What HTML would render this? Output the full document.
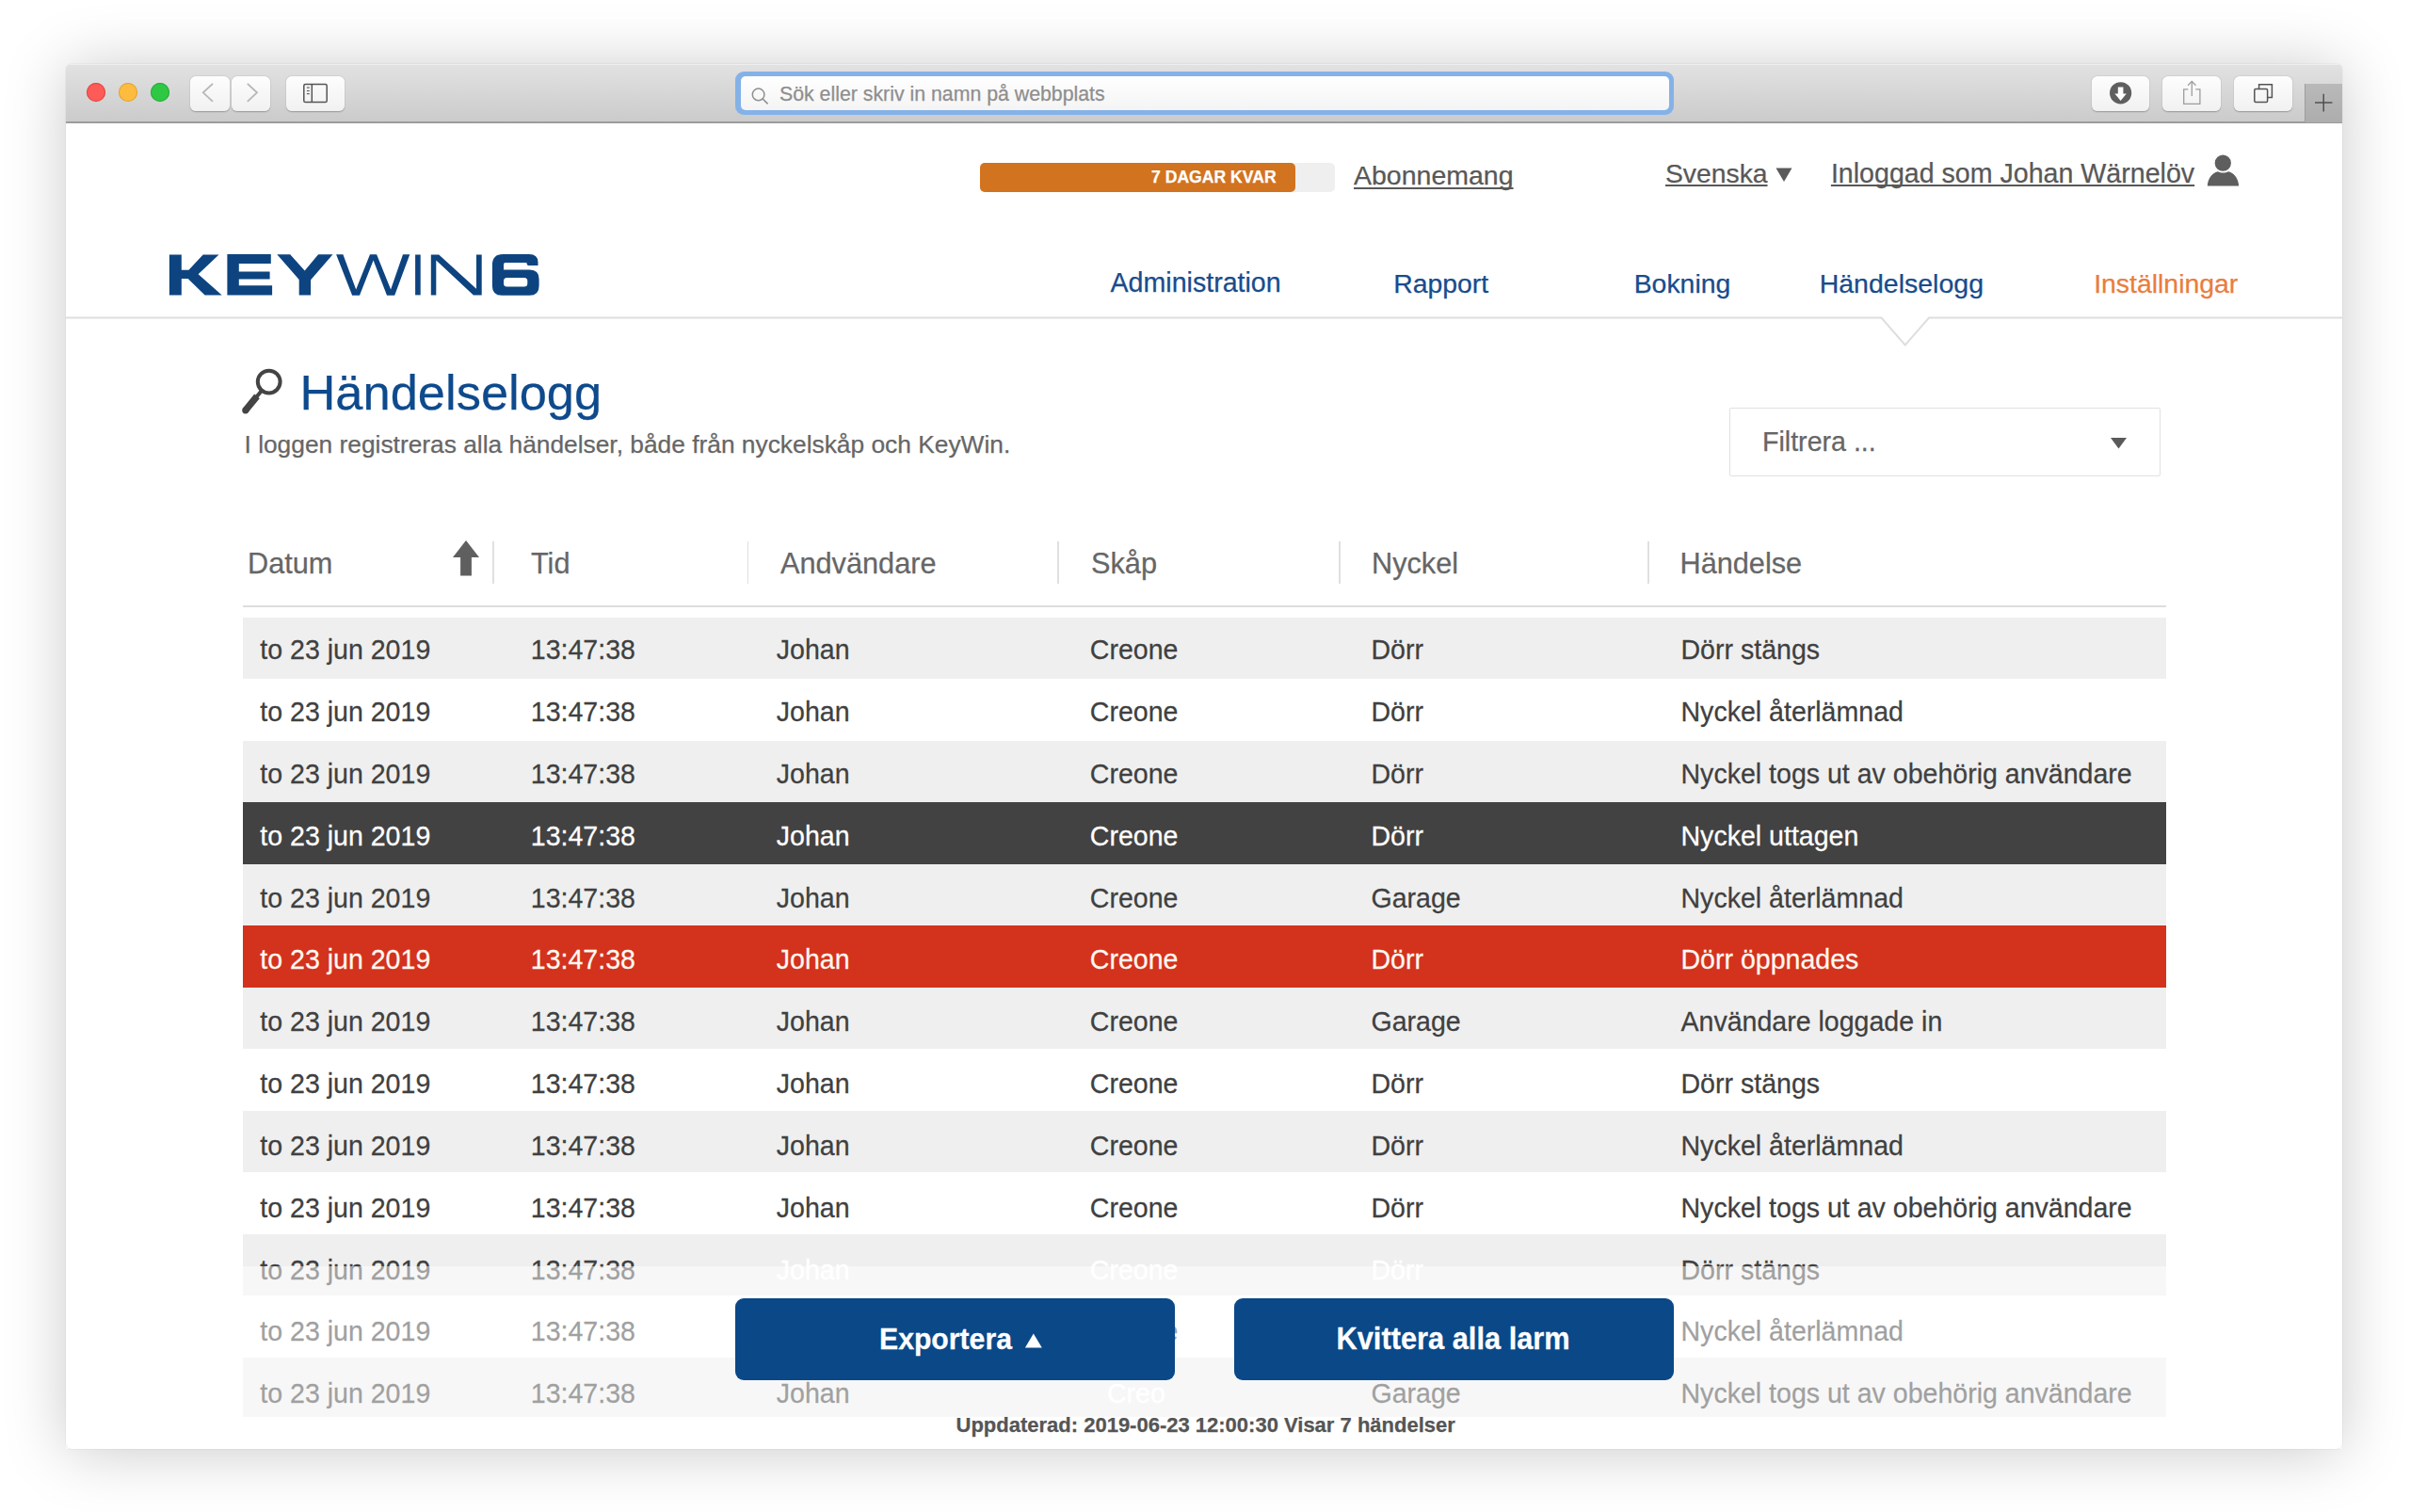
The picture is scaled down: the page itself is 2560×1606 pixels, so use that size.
<!DOCTYPE html>
<html><head><meta charset="utf-8"><title>KeyWin6</title><style>
*{margin:0;padding:0;box-sizing:border-box}
html,body{width:2560px;height:1606px;overflow:hidden;background:#fff}
body{position:relative;font-family:"Liberation Sans",sans-serif}
.t{position:absolute;white-space:nowrap;-webkit-text-stroke:0.25px currentColor}
.abs{position:absolute}
.tbtn{position:absolute;top:81px;height:37px;border-radius:6px;background:linear-gradient(#fdfdfd,#f1f1f1);box-shadow:0 0.5px 1.5px rgba(0,0,0,.28)}
</style></head><body>
<div class="abs" style="left:70px;top:68px;width:2418px;height:1471px;border-radius:6px;background:#fff;box-shadow:0 3px 66px rgba(0,0,0,.21),0 0 1px rgba(0,0,0,.3);overflow:hidden">
<div class="abs" style="left:0;top:0;width:2418px;height:62.5px;background:linear-gradient(#e2e2e2,#cbcbcb);border-bottom:2px solid #9c9c9c;box-shadow:inset 0 1px 0 #efefef"></div>
</div>
<div class="abs" style="left:92.1px;top:87.8px;width:20.4px;height:20.4px;border-radius:50%;background:#fc5b57;box-shadow:inset 0 0 0 0.9px #e0443f"></div>
<div class="abs" style="left:126.0px;top:87.8px;width:20.4px;height:20.4px;border-radius:50%;background:#fdbc3f;box-shadow:inset 0 0 0 0.9px #dea236"></div>
<div class="abs" style="left:159.8px;top:87.8px;width:20.4px;height:20.4px;border-radius:50%;background:#2fc844;box-shadow:inset 0 0 0 0.9px #27a83a"></div>
<div class="tbtn" style="left:202px;width:42px"></div>
<div class="tbtn" style="left:246px;width:41px"></div>
<svg class="abs" style="left:202px;top:81px" width="85" height="37" viewBox="0 0 85 37"><path d="M24 7.8 L13.8 17.3 L24 26.8" fill="none" stroke="#b6b6b6" stroke-width="1.8"/><path d="M60.8 7.8 L71 17.3 L60.8 26.8" fill="none" stroke="#b6b6b6" stroke-width="1.8"/></svg>
<div class="tbtn" style="left:304px;width:62px"></div>
<svg class="abs" style="left:304px;top:81px" width="62" height="37" viewBox="0 0 62 37"><rect x="18.8" y="8.6" width="24.4" height="19" rx="1.6" fill="none" stroke="#555" stroke-width="1.5"/><line x1="27.3" y1="8.6" x2="27.3" y2="27.6" stroke="#555" stroke-width="1.5"/><line x1="21.8" y1="12.1" x2="24.8" y2="12.1" stroke="#666" stroke-width="1.3"/><line x1="21.8" y1="15.5" x2="24.8" y2="15.5" stroke="#666" stroke-width="1.3"/><line x1="21.8" y1="18.6" x2="24.8" y2="18.6" stroke="#666" stroke-width="1.3"/></svg>
<div class="abs" style="left:781px;top:75.5px;width:997px;height:46.5px;border-radius:9px;background:#84b2e8"></div>
<div class="abs" style="left:786.5px;top:81px;width:986px;height:35.5px;border-radius:5px;background:linear-gradient(#ffffff,#f4f4f4)"></div>
<svg class="abs" style="left:796px;top:90.5px" width="24" height="24" viewBox="0 0 24 24"><circle cx="9.6" cy="9.4" r="6.3" fill="none" stroke="#8f8f8f" stroke-width="1.5"/><line x1="14.2" y1="14" x2="19.6" y2="19.4" stroke="#8f8f8f" stroke-width="1.6"/></svg>
<div class="t" style="left:828.00px;top:90.37px;font-size:21.3px;line-height:21.3px;color:#8e8e8e;font-weight:400;">Sök eller skriv in namn på webbplats</div>
<div class="tbtn" style="left:2222px;width:61px"></div>
<div class="tbtn" style="left:2297px;width:62px"></div>
<div class="tbtn" style="left:2373px;width:62px"></div>
<svg class="abs" style="left:2222px;top:81px" width="61" height="37" viewBox="0 0 61 37"><circle cx="30.6" cy="17.8" r="11.6" fill="#5f5f5f"/><path d="M27.8 11.4 h5.6 v7 h3.4 l-6.2 7.5 l-6.2 -7.5 h3.4 z" fill="#fff"/></svg>
<svg class="abs" style="left:2297px;top:81px" width="62" height="37" viewBox="0 0 62 37"><path d="M27.3 13.8 h-4.6 v15.6 h17.2 v-15.6 h-4.6" fill="none" stroke="#9d9d9d" stroke-width="1.3"/><line x1="31.3" y1="5.6" x2="31.3" y2="21" stroke="#9d9d9d" stroke-width="1.3"/><path d="M27.1 9.7 L31.3 5.4 L35.5 9.7" fill="none" stroke="#9d9d9d" stroke-width="1.3"/></svg>
<svg class="abs" style="left:2373px;top:81px" width="62" height="37" viewBox="0 0 62 37"><rect x="21.8" y="13.6" width="13.8" height="13.8" rx="1.2" fill="none" stroke="#555" stroke-width="1.5"/><path d="M26.6 13.6 V8.8 h13.8 v13.6 h-4.8" fill="none" stroke="#555" stroke-width="1.5"/></svg>
<div class="abs" style="left:2448px;top:89px;width:40px;height:41px;background:linear-gradient(#b9b9b9,#adadad);border-left:1px solid #9d9d9d"></div>
<svg class="abs" style="left:2448px;top:89px" width="40" height="41" viewBox="0 0 40 41"><line x1="11" y1="20" x2="29.5" y2="20" stroke="#4a4a4a" stroke-width="1.4"/><line x1="20.2" y1="10.8" x2="20.2" y2="29.5" stroke="#4a4a4a" stroke-width="1.4"/></svg>
<div class="abs" style="left:1041px;top:172.5px;width:377px;height:31.5px;border-radius:5px;background:#efefef"></div>
<div class="abs" style="left:1041px;top:172.5px;width:335px;height:31.5px;border-radius:5px;background:#d2731f"></div>
<div class="t" style="left:1223.00px;top:179.90px;font-size:17.6px;line-height:17.6px;color:#fff;font-weight:700;">7 DAGAR KVAR</div>
<div class="t" style="left:1438.00px;top:172.37px;font-size:28.5px;line-height:28.5px;color:#585858;font-weight:400;text-decoration:underline;text-underline-offset:3px;text-decoration-thickness:1.5px;text-decoration-skip-ink:none">Abonnemang</div>
<div class="t" style="left:1769.00px;top:169.84px;font-size:28.3px;line-height:28.3px;color:#585858;font-weight:400;text-decoration:underline;text-underline-offset:2.2px;text-decoration-thickness:1.5px;text-decoration-skip-ink:none">Svenska</div>
<svg class="abs" style="left:1886px;top:178px" width="18" height="15" viewBox="0 0 18 15"><path d="M0.5 0.5 H17.5 L9 15 Z" fill="#5a5a5a"/></svg>
<div class="t" style="left:1944.90px;top:169.59px;font-size:28.6px;line-height:28.6px;color:#585858;font-weight:400;text-decoration:underline;text-underline-offset:2.2px;text-decoration-thickness:1.5px;text-decoration-skip-ink:none">Inloggad som Johan Wärnelöv</div>
<svg class="abs" style="left:2344px;top:164px" width="35" height="34" viewBox="0 0 35 34"><circle cx="17.3" cy="9.2" r="8.6" fill="#5e5e5e"/><path d="M0.8 33.5 C1.5 24 7 19.2 12 18.3 C15 20 20 20 23 18.3 C28 19.2 33.5 24 34.2 33.5 Z" fill="#5e5e5e"/></svg>
<svg class="abs" style="left:0;top:0" width="600" height="340" viewBox="0 0 600 340"><g fill="#0d4480"><path d="M179.9 270.5 H192.8 V286.8 H200.5 L215.7 270.5 H232.5 L210.6 291.2 L235.7 313.6 H217.6 L199.7 296 H192.8 V313.6 H179.9 Z"/><path d="M241.4 270.1 H287.8 V279.9 H253.8 V288.6 H286.6 V296.5 H253.8 V303.2 H289.1 V313.5 H241.4 Z"/><path d="M294.3 270.3 H308.2 L323.7 287.4 L338.1 270.3 H353.5 L330.1 297.2 V313.6 H317.7 V297 Z"/><path d="M357.1 270.3 H364.4 L378.2 307.6 L393 270.3 H400.1 L415.1 307.6 L428 270.3 H435.3 L419.2 313.7 H411 L396.6 276.5 L382 313.7 H374.1 Z"/><rect x="441.1" y="270.5" width="5.6" height="42.9"/><path d="M457.8 270.5 H466.2 L506 306.8 V270.5 H511.7 V313.4 H502.9 L463.3 276.6 V313.4 H457.8 Z"/><path d="M534.4 269.9 H562 Q571.5 269.9 571.5 278.5 V282 H561.5 Q559.6 282 559.4 279 H536.8 Q535 279 535 281 V286.6 H562.6 Q572.6 286.6 572.6 296.6 V303.8 Q572.6 313.8 562.6 313.8 H533 Q522.9 313.8 522.9 303.8 V281.4 Q522.9 269.9 534.4 269.9 Z M538.5 295 Q535 295 535 298.5 V301.1 Q535 304.6 538.5 304.6 H556.8 Q560.3 304.6 560.3 301.1 V298.5 Q560.3 295 556.8 295 Z" fill-rule="evenodd"/></g></svg>
<div class="t" style="left:1179.50px;top:286.49px;font-size:28.6px;line-height:28.6px;color:#184c8d;font-weight:400;">Administration</div>
<div class="t" style="left:1480.20px;top:286.66px;font-size:28.4px;line-height:28.4px;color:#184c8d;font-weight:400;">Rapport</div>
<div class="t" style="left:1735.70px;top:286.66px;font-size:28.4px;line-height:28.4px;color:#184c8d;font-weight:400;">Bokning</div>
<div class="t" style="left:1932.70px;top:286.57px;font-size:28.5px;line-height:28.5px;color:#184c8d;font-weight:400;">Händelselogg</div>
<div class="t" style="left:2224.20px;top:286.66px;font-size:28.4px;line-height:28.4px;color:#e97d3e;font-weight:400;">Inställningar</div>
<svg class="abs" style="left:70px;top:320px" width="2418" height="60" viewBox="70 320 2418 60"><path d="M70 337.5 H1998.5 L2023.7 366.5 L2049 337.5 H2488" fill="none" stroke="#dedede" stroke-width="2"/></svg>
<svg class="abs" style="left:250px;top:385px" width="60" height="60" viewBox="0 0 60 60"><circle cx="35.7" cy="20.6" r="11.9" fill="none" stroke="#444" stroke-width="4"/><line x1="28.5" y1="29.3" x2="21.5" y2="37.8" stroke="#444" stroke-width="4"/><line x1="23" y1="35.9" x2="10.8" y2="50.8" stroke="#444" stroke-width="7.2"/><circle cx="10.8" cy="50.8" r="3.6" fill="#444"/></svg>
<div class="t" style="left:318.50px;top:390.50px;font-size:52.45px;line-height:52.45px;color:#0e4a8c;font-weight:400;">Händelselogg</div>
<div class="t" style="left:259.50px;top:458.61px;font-size:26.33px;line-height:26.33px;color:#666666;font-weight:400;">I loggen registreras alla händelser, både från nyckelskåp och KeyWin.</div>
<div class="abs" style="left:1837px;top:433px;width:458px;height:73px;border:1.5px solid #e1e1e1;border-radius:2px;background:#fff"></div>
<div class="t" style="left:1872.00px;top:454.79px;font-size:28.6px;line-height:28.6px;color:#666666;font-weight:400;">Filtrera ...</div>
<svg class="abs" style="left:2241px;top:464px" width="19" height="13" viewBox="0 0 19 13"><path d="M1 1 H18 L9.5 12.5 Z" fill="#5a5a5a"/></svg>
<div class="t" style="left:263.00px;top:583.51px;font-size:30.7px;line-height:30.7px;color:#666666;font-weight:400;">Datum</div>
<div class="t" style="left:564.00px;top:583.51px;font-size:30.7px;line-height:30.7px;color:#666666;font-weight:400;">Tid</div>
<div class="t" style="left:829.00px;top:583.51px;font-size:30.7px;line-height:30.7px;color:#666666;font-weight:400;">Andvändare</div>
<div class="t" style="left:1159.00px;top:583.51px;font-size:30.7px;line-height:30.7px;color:#666666;font-weight:400;">Skåp</div>
<div class="t" style="left:1457.00px;top:583.51px;font-size:30.7px;line-height:30.7px;color:#666666;font-weight:400;">Nyckel</div>
<div class="t" style="left:1784.50px;top:583.51px;font-size:30.7px;line-height:30.7px;color:#666666;font-weight:400;">Händelse</div>
<svg class="abs" style="left:480px;top:573px" width="30" height="40" viewBox="0 0 30 40"><path d="M15 1 L29 19 H20.9 V38.6 H9.1 V19 H1 Z" fill="#5f5f5f"/></svg>
<div class="abs" style="left:523.45px;top:575px;width:1.5px;height:45px;background:#e0e0e0"></div>
<div class="abs" style="left:793.75px;top:575px;width:1.5px;height:45px;background:#e0e0e0"></div>
<div class="abs" style="left:1123.25px;top:575px;width:1.5px;height:45px;background:#e0e0e0"></div>
<div class="abs" style="left:1422.25px;top:575px;width:1.5px;height:45px;background:#e0e0e0"></div>
<div class="abs" style="left:1750.05px;top:575px;width:1.5px;height:45px;background:#e0e0e0"></div>
<div class="abs" style="left:258px;top:643px;width:2043px;height:2px;background:#dddddd"></div>
<div class="abs" style="left:258px;top:655.90px;width:2043px;height:65.50px;background:#efefef"></div>
<div class="t" style="left:276.30px;top:676.23px;font-size:28.55px;line-height:28.55px;color:#404040;font-weight:400;transform:scaleY(1.05);transform-origin:0 24.17px;">to 23 jun 2019</div>
<div class="t" style="left:563.80px;top:676.23px;font-size:28.55px;line-height:28.55px;color:#404040;font-weight:400;transform:scaleY(1.05);transform-origin:0 24.17px;">13:47:38</div>
<div class="t" style="left:824.80px;top:676.23px;font-size:28.55px;line-height:28.55px;color:#404040;font-weight:400;transform:scaleY(1.05);transform-origin:0 24.17px;">Johan</div>
<div class="t" style="left:1157.80px;top:676.23px;font-size:28.55px;line-height:28.55px;color:#404040;font-weight:400;transform:scaleY(1.05);transform-origin:0 24.17px;">Creone</div>
<div class="t" style="left:1456.50px;top:676.23px;font-size:28.55px;line-height:28.55px;color:#404040;font-weight:400;transform:scaleY(1.05);transform-origin:0 24.17px;">Dörr</div>
<div class="t" style="left:1785.50px;top:676.23px;font-size:28.55px;line-height:28.55px;color:#404040;font-weight:400;transform:scaleY(1.05);transform-origin:0 24.17px;">Dörr stängs</div>
<div class="t" style="left:276.30px;top:742.07px;font-size:28.55px;line-height:28.55px;color:#404040;font-weight:400;transform:scaleY(1.05);transform-origin:0 24.17px;">to 23 jun 2019</div>
<div class="t" style="left:563.80px;top:742.07px;font-size:28.55px;line-height:28.55px;color:#404040;font-weight:400;transform:scaleY(1.05);transform-origin:0 24.17px;">13:47:38</div>
<div class="t" style="left:824.80px;top:742.07px;font-size:28.55px;line-height:28.55px;color:#404040;font-weight:400;transform:scaleY(1.05);transform-origin:0 24.17px;">Johan</div>
<div class="t" style="left:1157.80px;top:742.07px;font-size:28.55px;line-height:28.55px;color:#404040;font-weight:400;transform:scaleY(1.05);transform-origin:0 24.17px;">Creone</div>
<div class="t" style="left:1456.50px;top:742.07px;font-size:28.55px;line-height:28.55px;color:#404040;font-weight:400;transform:scaleY(1.05);transform-origin:0 24.17px;">Dörr</div>
<div class="t" style="left:1785.50px;top:742.07px;font-size:28.55px;line-height:28.55px;color:#404040;font-weight:400;transform:scaleY(1.05);transform-origin:0 24.17px;">Nyckel återlämnad</div>
<div class="abs" style="left:258px;top:786.90px;width:2043px;height:65.50px;background:#efefef"></div>
<div class="t" style="left:276.30px;top:807.91px;font-size:28.55px;line-height:28.55px;color:#404040;font-weight:400;transform:scaleY(1.05);transform-origin:0 24.17px;">to 23 jun 2019</div>
<div class="t" style="left:563.80px;top:807.91px;font-size:28.55px;line-height:28.55px;color:#404040;font-weight:400;transform:scaleY(1.05);transform-origin:0 24.17px;">13:47:38</div>
<div class="t" style="left:824.80px;top:807.91px;font-size:28.55px;line-height:28.55px;color:#404040;font-weight:400;transform:scaleY(1.05);transform-origin:0 24.17px;">Johan</div>
<div class="t" style="left:1157.80px;top:807.91px;font-size:28.55px;line-height:28.55px;color:#404040;font-weight:400;transform:scaleY(1.05);transform-origin:0 24.17px;">Creone</div>
<div class="t" style="left:1456.50px;top:807.91px;font-size:28.55px;line-height:28.55px;color:#404040;font-weight:400;transform:scaleY(1.05);transform-origin:0 24.17px;">Dörr</div>
<div class="t" style="left:1785.50px;top:807.91px;font-size:28.55px;line-height:28.55px;color:#404040;font-weight:400;transform:scaleY(1.05);transform-origin:0 24.17px;">Nyckel togs ut av obehörig användare</div>
<div class="abs" style="left:258px;top:852.40px;width:2043px;height:65.50px;background:#424242"></div>
<div class="t" style="left:276.30px;top:873.75px;font-size:28.55px;line-height:28.55px;color:#ffffff;font-weight:400;transform:scaleY(1.05);transform-origin:0 24.17px;">to 23 jun 2019</div>
<div class="t" style="left:563.80px;top:873.75px;font-size:28.55px;line-height:28.55px;color:#ffffff;font-weight:400;transform:scaleY(1.05);transform-origin:0 24.17px;">13:47:38</div>
<div class="t" style="left:824.80px;top:873.75px;font-size:28.55px;line-height:28.55px;color:#ffffff;font-weight:400;transform:scaleY(1.05);transform-origin:0 24.17px;">Johan</div>
<div class="t" style="left:1157.80px;top:873.75px;font-size:28.55px;line-height:28.55px;color:#ffffff;font-weight:400;transform:scaleY(1.05);transform-origin:0 24.17px;">Creone</div>
<div class="t" style="left:1456.50px;top:873.75px;font-size:28.55px;line-height:28.55px;color:#ffffff;font-weight:400;transform:scaleY(1.05);transform-origin:0 24.17px;">Dörr</div>
<div class="t" style="left:1785.50px;top:873.75px;font-size:28.55px;line-height:28.55px;color:#ffffff;font-weight:400;transform:scaleY(1.05);transform-origin:0 24.17px;">Nyckel uttagen</div>
<div class="abs" style="left:258px;top:917.90px;width:2043px;height:65.50px;background:#efefef"></div>
<div class="t" style="left:276.30px;top:939.59px;font-size:28.55px;line-height:28.55px;color:#404040;font-weight:400;transform:scaleY(1.05);transform-origin:0 24.17px;">to 23 jun 2019</div>
<div class="t" style="left:563.80px;top:939.59px;font-size:28.55px;line-height:28.55px;color:#404040;font-weight:400;transform:scaleY(1.05);transform-origin:0 24.17px;">13:47:38</div>
<div class="t" style="left:824.80px;top:939.59px;font-size:28.55px;line-height:28.55px;color:#404040;font-weight:400;transform:scaleY(1.05);transform-origin:0 24.17px;">Johan</div>
<div class="t" style="left:1157.80px;top:939.59px;font-size:28.55px;line-height:28.55px;color:#404040;font-weight:400;transform:scaleY(1.05);transform-origin:0 24.17px;">Creone</div>
<div class="t" style="left:1456.50px;top:939.59px;font-size:28.55px;line-height:28.55px;color:#404040;font-weight:400;transform:scaleY(1.05);transform-origin:0 24.17px;">Garage</div>
<div class="t" style="left:1785.50px;top:939.59px;font-size:28.55px;line-height:28.55px;color:#404040;font-weight:400;transform:scaleY(1.05);transform-origin:0 24.17px;">Nyckel återlämnad</div>
<div class="abs" style="left:258px;top:983.40px;width:2043px;height:65.50px;background:#d3321d"></div>
<div class="t" style="left:276.30px;top:1005.43px;font-size:28.55px;line-height:28.55px;color:#fff8f0;font-weight:400;transform:scaleY(1.05);transform-origin:0 24.17px;">to 23 jun 2019</div>
<div class="t" style="left:563.80px;top:1005.43px;font-size:28.55px;line-height:28.55px;color:#fff8f0;font-weight:400;transform:scaleY(1.05);transform-origin:0 24.17px;">13:47:38</div>
<div class="t" style="left:824.80px;top:1005.43px;font-size:28.55px;line-height:28.55px;color:#fff8f0;font-weight:400;transform:scaleY(1.05);transform-origin:0 24.17px;">Johan</div>
<div class="t" style="left:1157.80px;top:1005.43px;font-size:28.55px;line-height:28.55px;color:#fff8f0;font-weight:400;transform:scaleY(1.05);transform-origin:0 24.17px;">Creone</div>
<div class="t" style="left:1456.50px;top:1005.43px;font-size:28.55px;line-height:28.55px;color:#fff8f0;font-weight:400;transform:scaleY(1.05);transform-origin:0 24.17px;">Dörr</div>
<div class="t" style="left:1785.50px;top:1005.43px;font-size:28.55px;line-height:28.55px;color:#fff8f0;font-weight:400;transform:scaleY(1.05);transform-origin:0 24.17px;">Dörr öppnades</div>
<div class="abs" style="left:258px;top:1048.90px;width:2043px;height:65.50px;background:#efefef"></div>
<div class="t" style="left:276.30px;top:1071.27px;font-size:28.55px;line-height:28.55px;color:#404040;font-weight:400;transform:scaleY(1.05);transform-origin:0 24.17px;">to 23 jun 2019</div>
<div class="t" style="left:563.80px;top:1071.27px;font-size:28.55px;line-height:28.55px;color:#404040;font-weight:400;transform:scaleY(1.05);transform-origin:0 24.17px;">13:47:38</div>
<div class="t" style="left:824.80px;top:1071.27px;font-size:28.55px;line-height:28.55px;color:#404040;font-weight:400;transform:scaleY(1.05);transform-origin:0 24.17px;">Johan</div>
<div class="t" style="left:1157.80px;top:1071.27px;font-size:28.55px;line-height:28.55px;color:#404040;font-weight:400;transform:scaleY(1.05);transform-origin:0 24.17px;">Creone</div>
<div class="t" style="left:1456.50px;top:1071.27px;font-size:28.55px;line-height:28.55px;color:#404040;font-weight:400;transform:scaleY(1.05);transform-origin:0 24.17px;">Garage</div>
<div class="t" style="left:1785.50px;top:1071.27px;font-size:28.55px;line-height:28.55px;color:#404040;font-weight:400;transform:scaleY(1.05);transform-origin:0 24.17px;">Användare loggade in</div>
<div class="t" style="left:276.30px;top:1137.11px;font-size:28.55px;line-height:28.55px;color:#404040;font-weight:400;transform:scaleY(1.05);transform-origin:0 24.17px;">to 23 jun 2019</div>
<div class="t" style="left:563.80px;top:1137.11px;font-size:28.55px;line-height:28.55px;color:#404040;font-weight:400;transform:scaleY(1.05);transform-origin:0 24.17px;">13:47:38</div>
<div class="t" style="left:824.80px;top:1137.11px;font-size:28.55px;line-height:28.55px;color:#404040;font-weight:400;transform:scaleY(1.05);transform-origin:0 24.17px;">Johan</div>
<div class="t" style="left:1157.80px;top:1137.11px;font-size:28.55px;line-height:28.55px;color:#404040;font-weight:400;transform:scaleY(1.05);transform-origin:0 24.17px;">Creone</div>
<div class="t" style="left:1456.50px;top:1137.11px;font-size:28.55px;line-height:28.55px;color:#404040;font-weight:400;transform:scaleY(1.05);transform-origin:0 24.17px;">Dörr</div>
<div class="t" style="left:1785.50px;top:1137.11px;font-size:28.55px;line-height:28.55px;color:#404040;font-weight:400;transform:scaleY(1.05);transform-origin:0 24.17px;">Dörr stängs</div>
<div class="abs" style="left:258px;top:1179.90px;width:2043px;height:65.50px;background:#efefef"></div>
<div class="t" style="left:276.30px;top:1202.95px;font-size:28.55px;line-height:28.55px;color:#404040;font-weight:400;transform:scaleY(1.05);transform-origin:0 24.17px;">to 23 jun 2019</div>
<div class="t" style="left:563.80px;top:1202.95px;font-size:28.55px;line-height:28.55px;color:#404040;font-weight:400;transform:scaleY(1.05);transform-origin:0 24.17px;">13:47:38</div>
<div class="t" style="left:824.80px;top:1202.95px;font-size:28.55px;line-height:28.55px;color:#404040;font-weight:400;transform:scaleY(1.05);transform-origin:0 24.17px;">Johan</div>
<div class="t" style="left:1157.80px;top:1202.95px;font-size:28.55px;line-height:28.55px;color:#404040;font-weight:400;transform:scaleY(1.05);transform-origin:0 24.17px;">Creone</div>
<div class="t" style="left:1456.50px;top:1202.95px;font-size:28.55px;line-height:28.55px;color:#404040;font-weight:400;transform:scaleY(1.05);transform-origin:0 24.17px;">Dörr</div>
<div class="t" style="left:1785.50px;top:1202.95px;font-size:28.55px;line-height:28.55px;color:#404040;font-weight:400;transform:scaleY(1.05);transform-origin:0 24.17px;">Nyckel återlämnad</div>
<div class="t" style="left:276.30px;top:1268.79px;font-size:28.55px;line-height:28.55px;color:#404040;font-weight:400;transform:scaleY(1.05);transform-origin:0 24.17px;">to 23 jun 2019</div>
<div class="t" style="left:563.80px;top:1268.79px;font-size:28.55px;line-height:28.55px;color:#404040;font-weight:400;transform:scaleY(1.05);transform-origin:0 24.17px;">13:47:38</div>
<div class="t" style="left:824.80px;top:1268.79px;font-size:28.55px;line-height:28.55px;color:#404040;font-weight:400;transform:scaleY(1.05);transform-origin:0 24.17px;">Johan</div>
<div class="t" style="left:1157.80px;top:1268.79px;font-size:28.55px;line-height:28.55px;color:#404040;font-weight:400;transform:scaleY(1.05);transform-origin:0 24.17px;">Creone</div>
<div class="t" style="left:1456.50px;top:1268.79px;font-size:28.55px;line-height:28.55px;color:#404040;font-weight:400;transform:scaleY(1.05);transform-origin:0 24.17px;">Dörr</div>
<div class="t" style="left:1785.50px;top:1268.79px;font-size:28.55px;line-height:28.55px;color:#404040;font-weight:400;transform:scaleY(1.05);transform-origin:0 24.17px;">Nyckel togs ut av obehörig användare</div>
<div class="abs" style="left:258px;top:1310.90px;width:2043px;height:65.50px;background:#efefef"></div>
<div class="t" style="left:276.30px;top:1334.63px;font-size:28.55px;line-height:28.55px;color:#404040;font-weight:400;transform:scaleY(1.05);transform-origin:0 24.17px;">to 23 jun 2019</div>
<div class="t" style="left:563.80px;top:1334.63px;font-size:28.55px;line-height:28.55px;color:#404040;font-weight:400;transform:scaleY(1.05);transform-origin:0 24.17px;">13:47:38</div>
<div class="t" style="left:824.80px;top:1334.63px;font-size:28.55px;line-height:28.55px;color:#ffffff;font-weight:400;transform:scaleY(1.05);transform-origin:0 24.17px;">Johan</div>
<div class="t" style="left:1157.80px;top:1334.63px;font-size:28.55px;line-height:28.55px;color:#ffffff;font-weight:400;transform:scaleY(1.05);transform-origin:0 24.17px;">Creone</div>
<div class="t" style="left:1456.50px;top:1334.63px;font-size:28.55px;line-height:28.55px;color:#ffffff;font-weight:400;transform:scaleY(1.05);transform-origin:0 24.17px;">Dörr</div>
<div class="t" style="left:1785.50px;top:1334.63px;font-size:28.55px;line-height:28.55px;color:#404040;font-weight:400;transform:scaleY(1.05);transform-origin:0 24.17px;">Dörr stängs</div>
<div class="t" style="left:276.30px;top:1400.47px;font-size:28.55px;line-height:28.55px;color:#404040;font-weight:400;transform:scaleY(1.05);transform-origin:0 24.17px;">to 23 jun 2019</div>
<div class="t" style="left:563.80px;top:1400.47px;font-size:28.55px;line-height:28.55px;color:#404040;font-weight:400;transform:scaleY(1.05);transform-origin:0 24.17px;">13:47:38</div>
<div class="t" style="left:824.80px;top:1400.47px;font-size:28.55px;line-height:28.55px;color:#404040;font-weight:400;transform:scaleY(1.05);transform-origin:0 24.17px;">Johan</div>
<div class="t" style="left:1157.80px;top:1400.47px;font-size:28.55px;line-height:28.55px;color:#404040;font-weight:400;transform:scaleY(1.05);transform-origin:0 24.17px;">Creone</div>
<div class="t" style="left:1456.50px;top:1400.47px;font-size:28.55px;line-height:28.55px;color:#404040;font-weight:400;transform:scaleY(1.05);transform-origin:0 24.17px;">Dörr</div>
<div class="t" style="left:1785.50px;top:1400.47px;font-size:28.55px;line-height:28.55px;color:#404040;font-weight:400;transform:scaleY(1.05);transform-origin:0 24.17px;">Nyckel återlämnad</div>
<div class="abs" style="left:258px;top:1441.90px;width:2043px;height:65.50px;background:#efefef"></div>
<div class="t" style="left:276.30px;top:1466.31px;font-size:28.55px;line-height:28.55px;color:#404040;font-weight:400;transform:scaleY(1.05);transform-origin:0 24.17px;">to 23 jun 2019</div>
<div class="t" style="left:563.80px;top:1466.31px;font-size:28.55px;line-height:28.55px;color:#404040;font-weight:400;transform:scaleY(1.05);transform-origin:0 24.17px;">13:47:38</div>
<div class="t" style="left:824.80px;top:1466.31px;font-size:28.55px;line-height:28.55px;color:#404040;font-weight:400;transform:scaleY(1.05);transform-origin:0 24.17px;">Johan</div>
<div class="t" style="left:1176.00px;top:1466.31px;font-size:28.55px;line-height:28.55px;color:#ffffff;font-weight:400;transform:scaleY(1.05);transform-origin:0 24.17px;">Creo</div>
<div class="t" style="left:1456.50px;top:1466.31px;font-size:28.55px;line-height:28.55px;color:#404040;font-weight:400;transform:scaleY(1.05);transform-origin:0 24.17px;">Garage</div>
<div class="t" style="left:1785.50px;top:1466.31px;font-size:28.55px;line-height:28.55px;color:#404040;font-weight:400;transform:scaleY(1.05);transform-origin:0 24.17px;">Nyckel togs ut av obehörig användare</div>
<div class="abs" style="left:70px;top:1345px;width:2418px;height:194px;background:rgba(255,255,255,.5)"></div>
<div class="abs" style="left:258px;top:1505px;width:2043px;height:33px;background:#fff"></div>
<div class="abs" style="left:781px;top:1379px;width:467px;height:87.3px;border-radius:9px;background:#0a4888"></div>
<div class="abs" style="left:1311px;top:1379px;width:467px;height:87.3px;border-radius:9px;background:#0a4888"></div>
<div class="t" style="left:934.00px;top:1408.24px;font-size:30.2px;line-height:30.2px;color:#fff;font-weight:700;transform:scaleY(1.06);transform-origin:0 25.56px;">Exportera</div>
<svg class="abs" style="left:1088px;top:1416px" width="20" height="16" viewBox="0 0 20 16"><path d="M9.8 0.4 L18.8 15.4 H0.9 Z" fill="#fff"/></svg>
<div class="t" style="left:1419.50px;top:1407.93px;font-size:30.8px;line-height:30.8px;color:#fff;font-weight:700;transform:scaleY(1.06);transform-origin:0 26.07px;">Kvittera alla larm</div>
<div class="t" style="left:1015.50px;top:1502.88px;font-size:22px;line-height:22px;color:#555555;font-weight:700;">Uppdaterad: 2019-06-23 12:00:30 Visar 7 händelser</div>
</body></html>
